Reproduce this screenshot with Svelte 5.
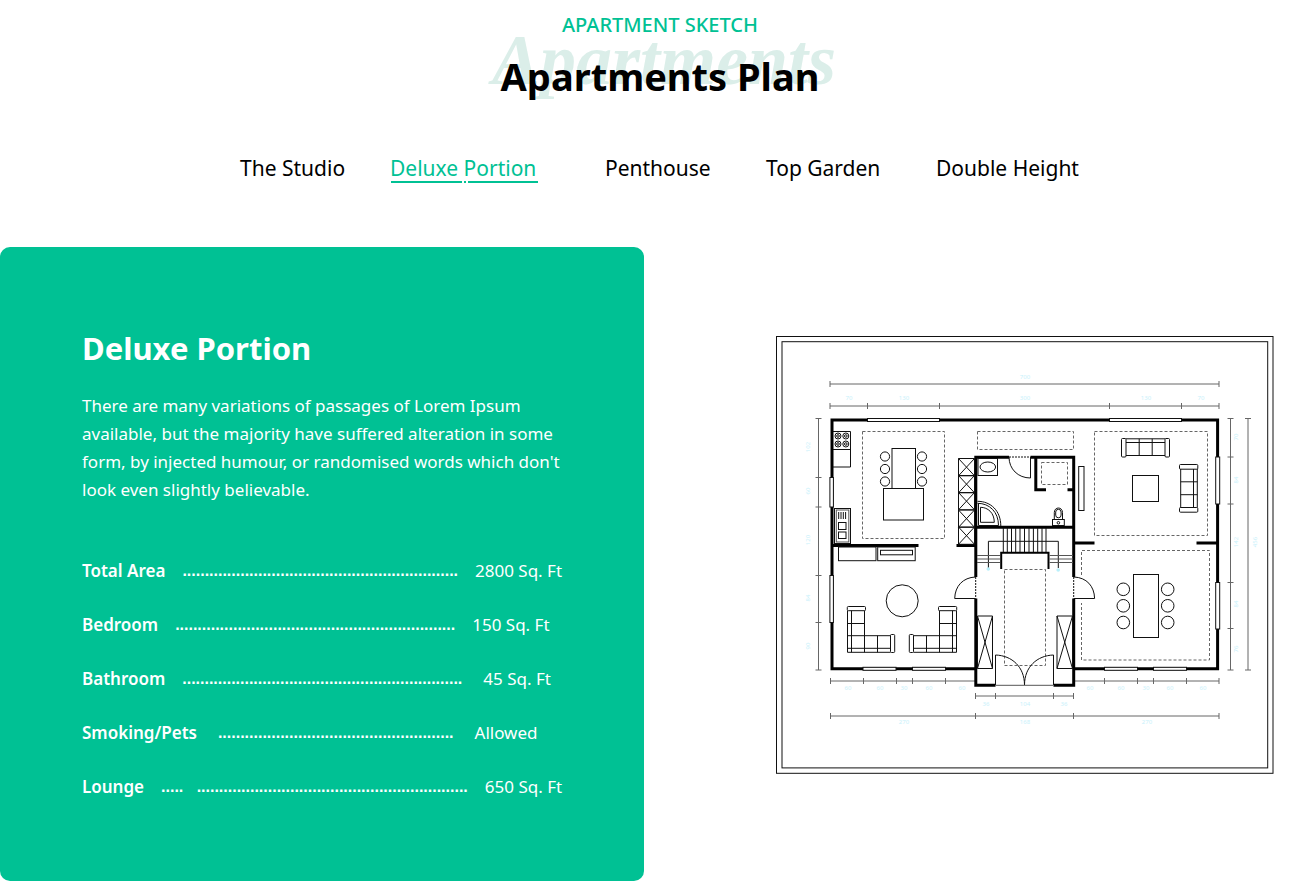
<script>
  const tabs = ['The Studio', 'Deluxe Portion', 'Penthouse', 'Top Garden', 'Double Height'];
  let active = $state('Deluxe Portion');

  const details = [
    { label: 'Total Area', leader: '.'.repeat(62), value: '2800 Sq. Ft' },
    { label: 'Bedroom', leader: '.'.repeat(63), value: '150 Sq. Ft' },
    { label: 'Bathroom', leader: '.'.repeat(63), value: '45 Sq. Ft', gap: 'wide' },
    { label: 'Smoking/Pets', leader: '.'.repeat(53), value: 'Allowed', gap: 'both' },
    { label: 'Lounge', leader: '.'.repeat(5) + '\u00a0\u00a0\u00a0' + '.'.repeat(61), value: '650 Sq. Ft' }
  ];

  // Horizontal dimension lines: y, tick positions
  const hDims = [
    [384, [830, 1219]],
    [406, [830, 867.5, 939.5, 1109.5, 1181.5, 1219]],
    [681, [830.5, 863.5, 896.5, 912.5, 945.5, 975.5]],
    [681, [1073.5, 1104.5, 1137.5, 1153.5, 1186.5, 1219]],
    [696, [975.5, 995.5, 1053.5, 1073.5]],
    [716, [830.5, 975.5, 1073.5, 1219]]
  ];
  // Vertical dimension lines: x, tick positions
  const vDims = [
    [818.5, [418.5, 477.5, 507, 575.5, 622.5, 670]],
    [1230.5, [418.5, 457, 504, 582.5, 628.5, 670]],
    [1248, [418.5, 670]]
  ];
  const hLabels = [
    [1025, 379, '700'], [849, 400, '70'], [904, 400, '130'], [1025, 400, '300'], [1146, 400, '130'], [1201, 400, '70'],
    [848, 690, '60'], [880, 690, '60'], [904, 690, '30'], [929, 690, '60'], [962, 690, '60'],
    [1090, 690, '60'], [1121, 690, '60'], [1146, 690, '30'], [1170, 690, '60'], [1203, 690, '60'],
    [986, 706, '36'], [1025, 706, '104'], [1064, 706, '36'],
    [904, 724, '270'], [1025, 724, '168'], [1147, 724, '270']
  ];
  const vLabels = [
    [810, 447, '102'], [810, 491, '60'], [810, 540, '120'], [810, 598, '84'], [810, 646, '90'],
    [1238, 437, '70'], [1238, 480, '84'], [1238, 542, '142'], [1238, 604, '84'], [1238, 649, '76'],
    [1257, 542, '456']
  ];
  // Windows: x, y, width, height
  const windows = [
    [867.5, 418.5, 72, 3], [1109.5, 418.5, 72, 3],
    [829.9, 477.5, 3.5, 29.5], [829.9, 575.5, 3.5, 47],
    [1215.7, 457, 4, 47], [1215.7, 582.5, 4, 46.5],
    [863, 667.3, 33, 3], [912.5, 667.3, 33, 3], [1104.5, 667.3, 33, 3], [1153.5, 667.3, 33, 3]
  ];
  const dashed = [
    [862.5, 431.5, 82, 107], [977.5, 431.5, 96, 18], [1094.5, 431.5, 113, 104],
    [1041.5, 462.5, 26, 22], [1004.5, 569.5, 41, 96]
  ];
  const burners = [[838, 436], [845.8, 436], [838, 444], [845.8, 444]];
  const shelves = [458.5, 475.5, 492.5, 510, 527];
  const treads = [1003.3, 1007.3, 1011.5, 1015.7, 1020, 1024.5, 1029, 1033.4, 1037.7, 1042, 1046];
</script>

<main>
  <header>
    <p class="eyebrow">APARTMENT SKETCH</p>
    <div class="title">
      <span class="script" aria-hidden="true">Apartments</span>
      <h1>Apartments Plan</h1>
    </div>
  </header>

  <nav aria-label="Apartment types">
    {#each tabs as tab}
      <button type="button" class:active={tab === active} onclick={() => (active = tab)}>{tab}</button>
    {/each}
  </nav>

  <section class="content">
    <article class="panel">
      <h2>Deluxe Portion</h2>
      <p class="intro">
        There are many variations of passages of Lorem Ipsum<br />
        available, but the majority have suffered alteration in some<br />
        form, by injected humour, or randomised words which don't<br />
        look even slightly believable.
      </p>
      <dl>
        {#each details as row}
          <div class="row {row.gap ?? ''}">
            <dt>{row.label}</dt>
            <dd class="leader" aria-hidden="true">{row.leader}</dd>
            <dd class="value">{row.value}</dd>
          </div>
        {/each}
      </dl>
    </article>

    <figure>
      <svg viewBox="776 336 498 438" role="img" aria-label="Floor plan">
        <rect x="776.5" y="336.5" width="496.5" height="436.8" />
        <rect x="782" y="341.7" width="485.7" height="426.2" />

        <g class="dim">
          {#each hDims as [y, ticks]}
            <path d="M{ticks[0]} {y}H{ticks[ticks.length - 1]}" />
            {#each ticks as x}<path d="M{x} {y - 3}v6" />{/each}
          {/each}
          {#each vDims as [x, ticks]}
            <path d="M{x} {ticks[0]}V{ticks[ticks.length - 1]}" />
            {#each ticks as y}<path d="M{x - 3} {y}h6" />{/each}
          {/each}
        </g>
        <g class="label">
          {#each hLabels as [x, y, t]}<text {x} {y}>{t}</text>{/each}
          {#each vLabels as [x, y, t]}<text {x} {y} transform="rotate(-90 {x} {y})">{t}</text>{/each}
        </g>

        <g class="wall">
          <path d="M975 668.7H832V420H1217.6V668.7H1074" />
          <path d="M1009 457.2H975.8V577M975.8 598.5V685.2H995.5M1053.5 685.2H1073.7V598.5M1073.7 577V457.2H1030.5" />
          <path d="M832 545.6H918.5M956.5 545.6H976M1074 543H1094.5M1196.5 543H1217" />
          <path d="M975 527.3H1074M1035.8 457V489.8H1046M1067.5 489.8H1074" />
          <path class="rail" d="M1001.2 569V552.8H1048.5V569" />
        </g>
        {#each windows as [x, y, w, h]}
          <rect class="window" {x} {y} width={w} height={h} />
        {/each}

        <g class="dash">
          {#each dashed as [x, y, w, h]}<rect {x} {y} width={w} height={h} />{/each}
          <path d="M1081.5 575V550.5H1209.5V660H1081.5V603" />
        </g>
        <path class="dots" d="M1009 457H1030.5M975.7 577V598.5M1073.7 577V598.5" />

        <!-- Kitchen -->
        <path d="M833 431.5H850.5V467H833M833 449.5H850.5" />
        {#each burners as [cx, cy]}
          <circle {cx} {cy} r="3" /><circle {cx} {cy} r="1.3" />
        {/each}
        <rect x="834.5" y="508.5" width="16" height="35" />
        <rect class="soft" x="836.3" y="510" width="12.5" height="32" />
        <path d="M838.7 512v7M841 512v7M843.3 512v7M845.6 512v7" />
        <rect x="838.5" y="522.5" width="7.5" height="7" />
        <rect x="838.5" y="532" width="7.5" height="6.5" />
        <rect x="892" y="448.5" width="23.5" height="40" />
        <rect x="883.5" y="488.5" width="40" height="31.5" />
        {#each [456.5, 469, 481.5] as cy}
          <circle cx="885" {cy} r="4.6" /><circle cx="922" {cy} r="4.6" />
        {/each}
        {#each shelves as y}
          <path d="M958.5 {y}h16v17.3h-16zl16 17.3M974.5 {y}l-16 17.3" />
        {/each}

        <!-- Bathroom -->
        <rect x="978" y="458.5" width="19.5" height="17" />
        <ellipse cx="987.8" cy="467" rx="7.8" ry="5" />
        <path d="M977.5 501.3C991 501.3 1000.8 511 1000.8 526M977.5 503.3C989.5 503.3 998.5 512 998.5 525.5H978.5V503.3" />
        <path d="M980.5 507.3C988 507.3 994.3 513 994.3 522.3H980.5Z" />
        <path d="M1030.5 457V478C1018 478 1009 469 1009 457" />
        <rect x="1052.5" y="519.5" width="11.8" height="6" />
        <circle cx="1058.4" cy="522.8" r="1.3" />
        <path d="M1054.3 519.5V512.5C1054.3 506.5 1062.5 506.5 1062.5 512.5V519.5" />
        <rect x="1055.7" y="509.3" width="5.4" height="8.5" rx="2.7" />

        <!-- Stairs and hall -->
        {#each treads as x}<path d="M{x} 528V552" />{/each}
        <path d="M988.4 568V541.3H1058.3V568" />
        <path class="soft" d="M977 555.5H1000M977 559H1000M977 562.5H1000M1049.5 555.5H1073M1049.5 559H1073M1049.5 562.5H1073" />
        <circle class="marker" cx="988.3" cy="569" r="1.8" />
        <circle class="marker" cx="1058.2" cy="570" r="1.8" />
        <path d="M977.5 616H992.5V668.5H977.5ZL992.5 668.5M992.5 616L977.5 668.5" />
        <path d="M1057 616H1072.5V668.5H1057ZL1072.5 668.5M1072.5 616L1057 668.5" />
        <path d="M975.5 577C963 577.5 955 586 954.7 598.5H975.5" />
        <path d="M1074 577C1086.5 577.5 1094.3 586 1094.6 598.5H1074" />
        <path d="M995.5 685V655C1012 655.5 1024.5 667 1024.5 685C1024.5 667 1037 655.5 1053.5 655V685" />
        <path class="soft" d="M995.5 685.3H1053.5" />

        <!-- Lounge -->
        <rect x="838.5" y="547" width="37.5" height="13.7" />
        <rect x="877.7" y="547" width="37.5" height="13.7" />
        <rect x="880.5" y="550.3" width="32" height="4.5" />
        <circle cx="902.2" cy="600.8" r="16" />
        {#each ['', 'translate(1804 0) scale(-1 1)'] as transform}
          <g {transform}>
            <rect x="847.3" y="606.5" width="18.2" height="4.2" rx="1" />
            <path d="M847.5 610.7V652.3H890.5M864.5 610.7V652.3M851.5 610.7V652.3M847.5 648.3H890.5M847.5 635.7H890.5M847.5 623.5H864.5M877.5 635.7V652.3" />
            <rect x="890.5" y="634.5" width="4.2" height="18" rx="1" />
          </g>
        {/each}

        <!-- Sitting room -->
        <rect x="1078.7" y="466.5" width="5.3" height="44" />
        <rect x="1121.5" y="438.5" width="4.5" height="18.5" rx="1" />
        <rect x="1165" y="438.5" width="4.5" height="18.5" rx="1" />
        <path d="M1126 438.8H1165M1126 442.5H1165M1126 455.5H1165M1139.2 438.8V455.5M1152.2 438.8V455.5" />
        <rect x="1132.5" y="475.5" width="26" height="26" />
        <rect x="1179.5" y="464.5" width="18.3" height="4.7" rx="1" />
        <rect x="1179.5" y="507.5" width="18.3" height="4.7" rx="1" />
        <path d="M1180.7 469V507.5M1193.5 469V507.5M1197.3 469V507.5M1180.7 481.8H1197.3M1180.7 494.7H1197.3" />

        <!-- Dining room -->
        <rect x="1133.5" y="574.5" width="25" height="63" />
        {#each [589.3, 605.8, 622.5] as cy}
          <circle cx="1123.3" {cy} r="6.3" /><circle cx="1167.7" {cy} r="6.3" />
        {/each}
      </svg>
    </figure>
  </section>
</main>

<style>
  :global(body) {
    margin: 0;
    background: #fff;
  }

  main {
    font-family: 'Noto Sans', sans-serif;
    color: #000;
    overflow: hidden;
  }

  header {
    padding: 12px 0 0 24px;
    text-align: center;
  }

  .eyebrow {
    position: relative;
    z-index: 1;
    margin: 0;
    color: #00c194;
    font-size: 20px;
    font-weight: 500;
    line-height: 26px;
  }

  .title {
    position: relative;
  }

  h1 {
    position: relative;
    margin: 0;
    padding: 10px 0 2px;
    font-size: 38px;
    font-weight: 700;
    line-height: 56px;
  }

  .script {
    position: absolute;
    inset: -18px 0 auto 8px;
    color: #dbeee9;
    font-family: 'Liberation Serif', serif;
    font-size: 72px;
    font-style: italic;
    font-weight: 700;
    line-height: 80px;
  }

  nav {
    display: grid;
    grid-template-columns: 150fr 215fr 161fr 170fr 144fr;
    justify-items: start;
    max-width: 840px;
    margin: 46px auto 0;
    padding-left: 24px;
  }

  button {
    position: relative;
    padding: 0;
    border: 0;
    background: none;
    color: inherit;
    font: inherit;
    font-size: 21px;
    line-height: 32px;
    white-space: nowrap;
    cursor: pointer;
  }

  button.active {
    color: #00c194;
  }

  button.active::after {
    content: '';
    position: absolute;
    inset: auto -2px 1px 1px;
    height: 2px;
    background: linear-gradient(
      90deg,
      #00c194 71px, transparent 71px 73px,
      #00c194 73px 75px, transparent 75px 77px,
      #00c194 77px
    );
  }

  .content {
    display: grid;
    grid-template-columns: 644fr 652fr;
    align-items: start;
    margin-top: 63px;
  }

  .panel {
    box-sizing: border-box;
    padding: 77px 64px 80px 82px;
    border-radius: 10px;
    background: #00c194;
    color: #fff;
  }

  h2 {
    margin: 0;
    font-size: 31px;
    font-weight: 700;
    line-height: 48px;
  }

  .intro {
    margin: 20px 0 0;
    font-size: 17px;
    line-height: 28px;
    white-space: nowrap;
  }

  dl {
    display: grid;
    gap: 26px;
    margin: 53px 0 0;
  }

  .row {
    display: flex;
    gap: 17px;
    font-size: 17px;
    line-height: 28px;
    white-space: nowrap;
  }

  .row.both {
    gap: 21px;
  }

  .row.wide .value {
    margin-left: 4px;
  }

  dt {
    font-weight: 600;
  }

  dd {
    margin: 0;
  }

  .leader {
    font-family: 'Liberation Sans', sans-serif;
    font-size: 16px;
    font-weight: 700;
  }

  figure {
    margin: 0;
    padding: 89px 22px 0 132px;
  }

  svg {
    display: block;
    width: 100%;
    height: auto;
    fill: none;
    stroke: #111;
    stroke-width: 1;
  }

  .dim {
    stroke: #666;
    stroke-width: 1;
  }

  .label {
    fill: #c9f1fb;
    stroke: none;
    font-size: 6px;
    text-anchor: middle;
  }

  .wall {
    stroke: #000;
    stroke-width: 3;
  }

  .rail {
    stroke-width: 2;
  }

  .window {
    fill: #fff;
  }

  .dash {
    stroke: #666;
    stroke-dasharray: 3 2;
  }

  .dots {
    stroke-dasharray: 2 1;
  }

  .soft {
    stroke: #555;
  }

  .marker {
    fill: #b9f0fb;
    stroke: none;
  }
</style>
